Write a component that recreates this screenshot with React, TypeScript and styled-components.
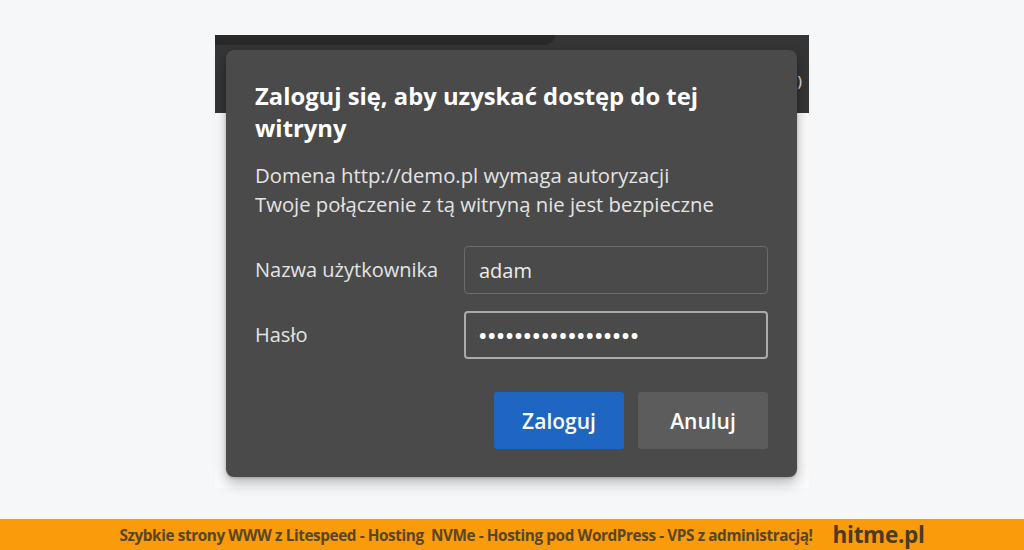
import styled, { createGlobalStyle } from "styled-components";

const GlobalStyle = createGlobalStyle`
  html, body {
    margin: 0;
    padding: 0;
    background: #f6f7f9;
  }
  * {
    box-sizing: border-box;
  }
`;

export default function App() {
  return (
    <>
      <GlobalStyle />
      <Page>
        <Shot>
          <BarGlyph>)</BarGlyph>
          <Dialog>
            <Title>Zaloguj się, aby uzyskać dostęp do tej witryny</Title>
            <Info>
              Domena http://demo.pl wymaga autoryzacji
              <br />
              Twoje połączenie z tą witryną nie jest bezpieczne
            </Info>
            <Fields>
              <Field>
                <Label>Nazwa użytkownika</Label>
                <Input>adam</Input>
              </Field>
              <Field>
                <Label>Hasło</Label>
                <Input focused>
                  <Dots>••••••••••••••••••</Dots>
                </Input>
              </Field>
            </Fields>
            <Actions>
              <Button primary>Zaloguj</Button>
              <Button>Anuluj</Button>
            </Actions>
          </Dialog>
        </Shot>
      </Page>
      <Footer>
        <FooterText>
          Szybkie strony WWW z Litespeed - Hosting&nbsp; NVMe - Hosting pod WordPress - VPS z administracją!
        </FooterText>
        <Brand>hitme.pl</Brand>
      </Footer>
    </>
  );
}

const Page = styled.main`
  height: 519px;
  padding: 35px 0 0 215px;
`;

const Shot = styled.div`
  position: relative;
  width: 594px;
  height: 453px;
  padding: 15px 12px 0 11px;
  background: linear-gradient(#353535 0 78px, #fbfbfb 78px);

  &::before {
    content: "";
    position: absolute;
    left: 0;
    top: 0;
    width: 340px;
    height: 10px;
    background: #292929;
    border-bottom-right-radius: 14px;
  }
`;

const BarGlyph = styled.span`
  position: absolute;
  right: 7px;
  top: 36px;
  color: #d8d8d8;
  font: 600 14px "Open Sans", sans-serif;
`;

const Dialog = styled.section`
  position: relative;
  width: 571px;
  height: 427px;
  padding: 30px 29px 28px;
  background: #4a4a4a;
  border-radius: 8px;
  box-shadow: 0 6px 14px rgba(0, 0, 0, 0.28), 0 1px 3px rgba(0, 0, 0, 0.2);
  font-family: "Open Sans", "Noto Sans", sans-serif;
  color: #ececec;
`;

const Title = styled.h1`
  margin: 0;
  max-width: 480px;
  font-size: 23.8px;
  line-height: 32px;
  font-weight: 700;
  color: #ffffff;
`;

const Info = styled.p`
  margin: 17px 0 0;
  font-size: 20.3px;
  line-height: 29px;
  color: #e4e4e4;
`;

const Fields = styled.div`
  display: flex;
  flex-direction: column;
  gap: 17px;
  margin-top: 27px;
`;

const Field = styled.div`
  display: flex;
  align-items: center;
`;

const Label = styled.span`
  width: 209px;
  font-size: 20px;
  line-height: 28px;
  color: #e4e4e4;
`;

const Input = styled.div<{ focused?: boolean }>`
  display: flex;
  align-items: center;
  width: 304px;
  height: 48px;
  padding: 0 ${({ focused }) => (focused ? "13px" : "14px")};
  border: ${({ focused }) => (focused ? "2px solid #ababab" : "1px solid #6c6c6c")};
  border-radius: 4px;
  font-size: 20px;
  color: #ececec;
`;

const Dots = styled.span`
  font-size: 20px;
  font-weight: 700;
  letter-spacing: 1.4px;
  color: #ffffff;
`;

const Actions = styled.div`
  display: flex;
  justify-content: flex-end;
  gap: 14px;
  margin-top: 33px;
`;

const Button = styled.button<{ primary?: boolean }>`
  width: 130px;
  height: 57px;
  border: none;
  border-radius: 3px;
  background: ${({ primary }) => (primary ? "#1f66c2" : "#5c5c5c")};
  color: #ffffff;
  font: 600 21px "Open Sans", "Noto Sans", sans-serif;
`;

const Footer = styled.footer`
  display: flex;
  align-items: center;
  justify-content: center;
  gap: 20px;
  height: 31px;
  padding-left: 20px;
  background: #f99b0b;
  color: #584626;
`;

const FooterText = styled.span`
  font: 700 15.3px "Open Sans", sans-serif;
  letter-spacing: -0.4px;
`;

const Brand = styled.span`
  font: 700 22.5px "Open Sans", sans-serif;
  color: #4a3b22;
  letter-spacing: -0.3px;
`;
